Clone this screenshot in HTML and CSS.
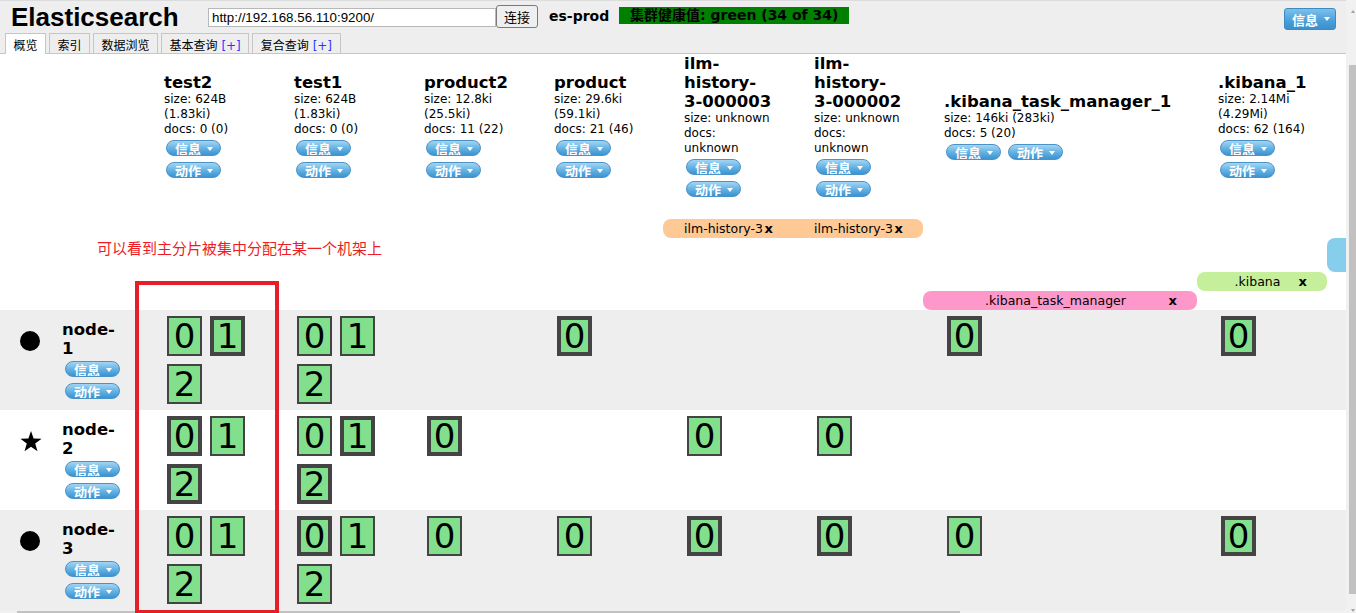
FILE: index.html
```html
<!DOCTYPE html>
<html lang="zh-CN">
<head>
<meta charset="utf-8">
<title>Elasticsearch</title>
<link rel="stylesheet" href="styles.css">
</head>
<body>
<div class="page">
  <div class="main">
    <header class="header">
      <div class="topbar">
        <h1 class="brand">Elasticsearch</h1>
        <input class="url" type="text" value="http://192.168.56.110:9200/">
        <button class="connect">连接</button>
        <span class="cluster-name">es-prod</span>
        <span class="health">集群健康值: green (34 of 34)</span>
        <span class="spacer"></span>
        <span class="btn-info">信息<i class="caret"></i></span>
      </div>
      <nav class="tabs">
        <span class="tab active">概览</span>
        <span class="tab">索引</span>
        <span class="tab">数据浏览</span>
        <span class="tab">基本查询 <span class="plus">[+]</span></span>
        <span class="tab">复合查询 <span class="plus">[+]</span></span>
      </nav>
    </header>

    <section class="overview">
      <div class="grid idx-row">
        <div></div>
        <div class="idx">
          <div class="idx-name">test2</div>
          <div class="idx-meta"><div>size: 624B (1.83ki)</div><div>docs: 0 (0)</div></div>
          <div class="idx-btns"><span class="pill">信息<i class="caret"></i></span><span class="pill">动作<i class="caret"></i></span></div>
        </div>
        <div class="idx">
          <div class="idx-name">test1</div>
          <div class="idx-meta"><div>size: 624B (1.83ki)</div><div>docs: 0 (0)</div></div>
          <div class="idx-btns"><span class="pill">信息<i class="caret"></i></span><span class="pill">动作<i class="caret"></i></span></div>
        </div>
        <div class="idx">
          <div class="idx-name">product2</div>
          <div class="idx-meta"><div>size: 12.8ki (25.5ki)</div><div>docs: 11 (22)</div></div>
          <div class="idx-btns"><span class="pill">信息<i class="caret"></i></span><span class="pill">动作<i class="caret"></i></span></div>
        </div>
        <div class="idx">
          <div class="idx-name">product</div>
          <div class="idx-meta"><div>size: 29.6ki (59.1ki)</div><div>docs: 21 (46)</div></div>
          <div class="idx-btns"><span class="pill">信息<i class="caret"></i></span><span class="pill">动作<i class="caret"></i></span></div>
        </div>
        <div class="idx">
          <div class="idx-name">ilm-<wbr>history-<wbr>3-000003</div>
          <div class="idx-meta"><div>size: unknown</div><div>docs: unknown</div></div>
          <div class="idx-btns"><span class="pill">信息<i class="caret"></i></span><span class="pill">动作<i class="caret"></i></span></div>
        </div>
        <div class="idx">
          <div class="idx-name">ilm-<wbr>history-<wbr>3-000002</div>
          <div class="idx-meta"><div>size: unknown</div><div>docs: unknown</div></div>
          <div class="idx-btns"><span class="pill">信息<i class="caret"></i></span><span class="pill">动作<i class="caret"></i></span></div>
        </div>
        <div class="idx">
          <div class="idx-name">.kibana_task_manager_1</div>
          <div class="idx-meta"><div>size: 146ki (283ki)</div><div>docs: 5 (20)</div></div>
          <div class="idx-btns"><span class="pill">信息<i class="caret"></i></span><span class="pill">动作<i class="caret"></i></span></div>
        </div>
        <div class="idx">
          <div class="idx-name">.kibana_1</div>
          <div class="idx-meta"><div>size: 2.14Mi (4.29Mi)</div><div>docs: 62 (164)</div></div>
          <div class="idx-btns"><span class="pill">信息<i class="caret"></i></span><span class="pill">动作<i class="caret"></i></span></div>
        </div>
        <div></div>
      </div>

      <div class="grid alias-row h19">
        <div class="bar bar-ilm">
          <div class="seg"><span class="alias-name">ilm-history-3</span><span class="x">x</span></div>
          <div class="seg"><span class="alias-name">ilm-history-3</span><span class="x">x</span></div>
        </div>
      </div>
      <div class="grid alias-row h34">
        <div class="bar bar-blue"></div>
      </div>
      <div class="grid alias-row h19">
        <div class="bar bar-kibana">
          <div class="seg"><span class="alias-name">.kibana</span><span class="x">x</span></div>
        </div>
      </div>
      <div class="grid alias-row h19">
        <div class="bar bar-ktm">
          <div class="seg"><span class="alias-name">.kibana_task_manager</span><span class="x">x</span></div>
        </div>
      </div>

      <div class="grid node-row alt">
        <div class="node">
          <span class="node-icon dot"></span>
          <div class="node-name">node-<wbr>1</div>
          <div class="node-btns"><span class="pill">信息<i class="caret"></i></span><span class="pill">动作<i class="caret"></i></span></div>
        </div>
        <div class="shards"><span class="shard">0</span><span class="shard p">1</span><span class="shard">2</span></div>
        <div class="shards"><span class="shard">0</span><span class="shard">1</span><span class="shard">2</span></div>
        <div class="shards"></div>
        <div class="shards"><span class="shard p">0</span></div>
        <div class="shards"></div>
        <div class="shards"></div>
        <div class="shards"><span class="shard p">0</span></div>
        <div class="shards"><span class="shard p">0</span></div>
      </div>

      <div class="grid node-row">
        <div class="node">
          <svg class="node-icon star" viewBox="0 0 22 21" width="22" height="21"><polygon points="11,0 13.6,7.6 21.6,7.7 15.2,12.6 17.5,20.3 11,15.7 4.5,20.3 6.8,12.6 0.4,7.7 8.4,7.6" fill="#000"/></svg>
          <div class="node-name">node-<wbr>2</div>
          <div class="node-btns"><span class="pill">信息<i class="caret"></i></span><span class="pill">动作<i class="caret"></i></span></div>
        </div>
        <div class="shards"><span class="shard p">0</span><span class="shard">1</span><span class="shard p">2</span></div>
        <div class="shards"><span class="shard">0</span><span class="shard p">1</span><span class="shard p">2</span></div>
        <div class="shards"><span class="shard p">0</span></div>
        <div class="shards"></div>
        <div class="shards"><span class="shard">0</span></div>
        <div class="shards"><span class="shard">0</span></div>
        <div class="shards"></div>
        <div class="shards"></div>
      </div>

      <div class="grid node-row alt">
        <div class="node">
          <span class="node-icon dot"></span>
          <div class="node-name">node-<wbr>3</div>
          <div class="node-btns"><span class="pill">信息<i class="caret"></i></span><span class="pill">动作<i class="caret"></i></span></div>
        </div>
        <div class="shards"><span class="shard">0</span><span class="shard">1</span><span class="shard">2</span></div>
        <div class="shards"><span class="shard p">0</span><span class="shard">1</span><span class="shard">2</span></div>
        <div class="shards"><span class="shard">0</span></div>
        <div class="shards"><span class="shard">0</span></div>
        <div class="shards"><span class="shard p">0</span></div>
        <div class="shards"><span class="shard p">0</span></div>
        <div class="shards"><span class="shard">0</span></div>
        <div class="shards"><span class="shard p">0</span></div>
      </div>
    </section>

    <div class="hscroll"><div class="hthumb"></div></div>

    <p class="note">可以看到主分片被集中分配在某一个机架上</p>
    <div class="highlight"></div>
  </div>

  <div class="vscroll">
    <i class="arrow-up"></i>
    <div class="vthumb"></div>
    <i class="arrow-down"></i>
  </div>
</div>
</body>
</html>
```

FILE: styles.css
```css
* { box-sizing: border-box; }

html, body {
  margin: 0;
  padding: 0;
  overflow: hidden;
  background: #fff;
}

body {
  font-family: "DejaVu Sans", "Noto Sans CJK SC", sans-serif;
  font-size: 12px;
  color: #000;
}

.page {
  display: flex;
  width: 1356px;
  height: 613px;
}

.main {
  position: relative;
  width: 1346px;
  height: 613px;
  overflow: hidden;
  display: flex;
  flex-direction: column;
}

/* ---------- header ---------- */
.header {
  flex: 0 0 auto;
  background: #eee;
  border-top: 1px solid #dcdcdc;
}

.topbar {
  display: flex;
  align-items: flex-start;
  height: 32px;
}

.brand {
  flex: 0 0 208px;
  margin: 1px 0 0;
  padding-left: 11px;
  font-family: "Liberation Sans", Arial, sans-serif;
  font-size: 26px;
  line-height: 30px;
  font-weight: bold;
  color: #000;
}

.url {
  width: 288px;
  height: 19px;
  margin: 7px 0 0;
  padding: 0 3px;
  border: 1px solid #b8b8b8;
  background: #fff;
  font-family: "Liberation Sans", Arial, sans-serif;
  font-size: 13.33px;
  color: #000;
  outline: none;
}

.connect {
  width: 42px;
  height: 23px;
  margin: 4px 0 0;
  padding: 0;
  border: 1px solid #7a7a7a;
  border-radius: 3px;
  background: #efefef;
  font-family: "Noto Sans CJK SC", sans-serif;
  font-size: 13px;
  color: #000;
}

.cluster-name {
  flex: 0 0 70px;
  margin: 7px 0 0 11px;
  font-size: 14px;
  line-height: 17px;
  font-weight: bold;
}

.health {
  margin-top: 6px;
  height: 17px;
  padding: 0 11px;
  background: #008000;
  color: #000;
  font-size: 14px;
  line-height: 17px;
  font-weight: bold;
  white-space: nowrap;
}

.spacer { flex: 1; }

.btn-info {
  display: flex;
  align-items: center;
  gap: 6px;
  width: 52px;
  height: 22px;
  margin: 7px 10px 0 0;
  padding-left: 7px;
  border: 1px solid #3d8ac2;
  border-radius: 3px;
  background: linear-gradient(#7cc1ec, #4a9fd9 60%, #3a8fcd);
  color: #fff;
  font-size: 13px;
  font-weight: bold;
}

.caret {
  display: inline-block;
  width: 0;
  height: 0;
  border-left: 3.5px solid transparent;
  border-right: 3.5px solid transparent;
  border-top: 4px solid #fff;
}

.tabs {
  display: flex;
  align-items: flex-end;
  gap: 3px;
  height: 21px;
  padding-left: 5px;
  border-bottom: 1px solid #c6c6c6;
}

.tab {
  height: 20px;
  padding: 6px 7.5px 0;
  border: 1px solid #c6c6c6;
  border-bottom: none;
  background: #eee;
  font-size: 12px;
  line-height: 13px;
  white-space: nowrap;
}

.tab.active {
  height: 21px;
  margin-bottom: -1px;
  background: #fff;
}

.plus { color: #3333ff; }

/* ---------- overview grid ---------- */
.overview {
  flex: 1 1 auto;
}

.grid {
  display: grid;
  grid-template-columns: 160px repeat(6, 130px) 274px 130px 130px;
}

.idx-row {
  height: 143px;
  align-items: center;
  margin-bottom: 22px;
}

.idx {
  padding: 0 36.5px 0 4px;
}

.idx-name {
  font-size: 16.5px;
  line-height: 19px;
  font-weight: bold;
}

.idx-meta {
  line-height: 15px;
}

.idx-btns {
  display: flex;
  flex-wrap: wrap;
  gap: 6px 7px;
  margin-top: 3px;
  padding-left: 2px;
}

.pill {
  display: inline-flex;
  align-items: flex-start;
  gap: 6px;
  flex: none;
  width: 55px;
  height: 16px;
  padding: 2px 0 0 8px;
  overflow: hidden;
  border: 1px solid #4a93c9;
  border-radius: 8px;
  background: linear-gradient(#a4d5f3, #66b3e4 50%, #3b93d0);
  color: #fff;
  font-size: 13px;
  line-height: 13px;
  font-weight: bold;
  white-space: nowrap;
}

.pill .caret {
  margin-top: 4px;
}

/* ---------- aliases ---------- */
.alias-row.h19 { height: 19px; }
.alias-row.h34 { height: 34px; }

.bar {
  display: flex;
  margin: 0 17px 0 -17px;
  border-radius: 8px;
  font-size: 12.5px;
  line-height: 19px;
}

.bar-ilm { grid-column: 6 / 8; background: #fec994; }
.bar-blue { grid-column: 10 / 11; background: #87ceed; margin-right: 0; border-radius: 8px 0 0 8px; }
.bar-kibana { grid-column: 9 / 10; background: #c5ef9b; }
.bar-ktm { grid-column: 8 / 9; background: #ff98ca; }

.seg {
  flex: 1;
  display: grid;
  grid-template-columns: 1fr auto 1fr;
  padding: 0 20px 0 11px;
}

.alias-name { grid-column: 2; white-space: nowrap; }

.x {
  grid-column: 3;
  justify-self: end;
  font-weight: bold;
  font-size: 13px;
}

/* ---------- nodes ---------- */
.node-row { height: 100px; }
.node-row.alt { background: #eee; }

.node {
  display: grid;
  grid-template-columns: 42px 58px;
  align-content: center;
  row-gap: 3px;
  padding-left: 20px;
}

.node-icon {
  align-self: center;
  margin-top: 3px;
}

.dot {
  width: 20px;
  height: 20px;
  border-radius: 50%;
  background: #000;
}

.star { display: block; }

.node-name {
  font-size: 16.5px;
  line-height: 18.3px;
  font-weight: bold;
}

.node-btns {
  grid-column: 2;
  display: flex;
  flex-direction: column;
  align-items: flex-start;
  gap: 6px;
  padding-left: 3px;
}

.shards {
  display: flex;
  flex-wrap: wrap;
  align-content: flex-start;
  padding: 2px 3px;
}

.shard {
  display: flex;
  align-items: center;
  justify-content: center;
  width: 35px;
  height: 40px;
  margin: 4px;
  border: 2px solid #444;
  background: #82e08c;
  font-size: 34px;
  line-height: 1;
}

.shard.p { border-width: 4px; }

/* ---------- scrollbars ---------- */
.hscroll {
  flex: 0 0 3px;
  background: #f1f1f1;
  padding-top: 1px;
}

.hthumb {
  width: 943px;
  height: 2px;
  margin-left: 17px;
  background: #c1c1c1;
}

.vscroll {
  width: 10px;
  height: 613px;
  background: #f1f1f1;
  display: flex;
  flex-direction: column;
  align-items: flex-end;
}

.vthumb {
  width: 7px;
  height: 529px;
  margin-top: 52px;
  background: #c1c1c1;
}

.arrow-up, .arrow-down {
  display: block;
  width: 0;
  height: 0;
  margin-right: 1px;
  border-left: 2.5px solid transparent;
  border-right: 2.5px solid transparent;
}

.arrow-up {
  margin-top: 10px;
  border-bottom: 3px solid #a3a3a3;
}

.arrow-down {
  margin-top: 15px;
  border-top: 3px solid #a3a3a3;
}

/* ---------- annotations ---------- */
.note {
  position: absolute;
  left: 97px;
  top: 240px;
  margin: 0;
  font-family: "Noto Sans CJK SC", sans-serif;
  font-size: 15px;
  line-height: 15px;
  color: #ee1c25;
  white-space: nowrap;
}

.highlight {
  position: absolute;
  left: 135px;
  top: 281px;
  width: 144px;
  height: 333px;
  border: 4px solid #e41f27;
}
```
